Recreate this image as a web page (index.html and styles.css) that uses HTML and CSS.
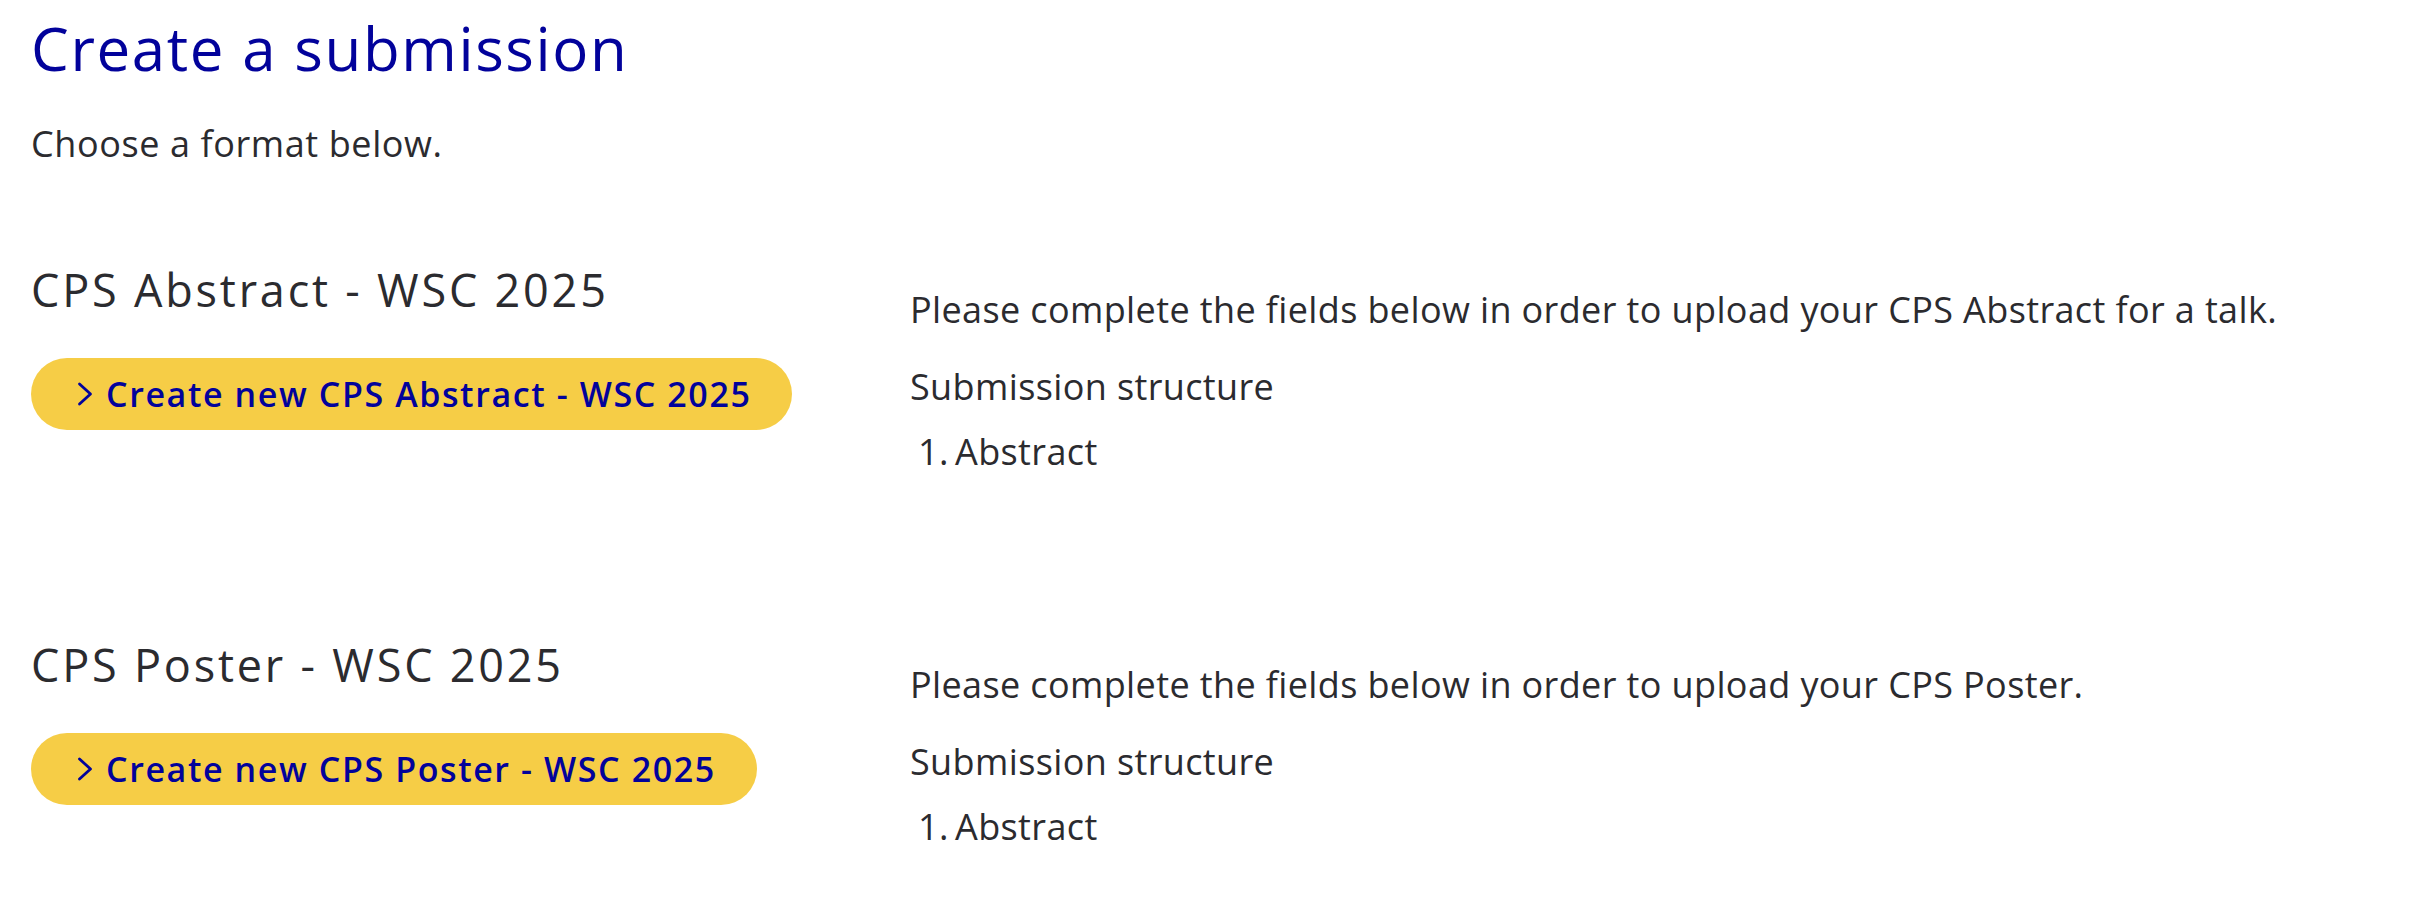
FILE: index.html
```html
<!DOCTYPE html>
<html lang="en">
<head>
<meta charset="utf-8">
<title>Create a submission</title>
<link rel="stylesheet" href="styles.css">
</head>
<body>
<main class="page">
  <h1 class="title">Create a submission</h1>
  <p class="intro">Choose a format below.</p>

  <section class="format">
    <div class="format-left">
      <h2 class="format-name">CPS Abstract - WSC 2025</h2>
      <a class="btn" href="#"><svg class="chev" viewBox="0 0 16 24" width="16" height="24" aria-hidden="true"><path d="M2.5 2 L13.5 12 L2.5 22" fill="none" stroke="currentColor" stroke-width="2.8" stroke-linecap="round" stroke-linejoin="round"/></svg><span>Create new CPS Abstract - WSC 2025</span></a>
    </div>
    <div class="format-right">
      <p class="desc">Please complete the fields below in order to upload your CPS Abstract for a talk.</p>
      <p class="struct">Submission structure</p>
      <ol class="parts"><li>Abstract</li></ol>
    </div>
  </section>

  <section class="format">
    <div class="format-left">
      <h2 class="format-name">CPS Poster - WSC 2025</h2>
      <a class="btn" href="#"><svg class="chev" viewBox="0 0 16 24" width="16" height="24" aria-hidden="true"><path d="M2.5 2 L13.5 12 L2.5 22" fill="none" stroke="currentColor" stroke-width="2.8" stroke-linecap="round" stroke-linejoin="round"/></svg><span>Create new CPS Poster - WSC 2025</span></a>
    </div>
    <div class="format-right">
      <p class="desc">Please complete the fields below in order to upload your CPS Poster.</p>
      <p class="struct">Submission structure</p>
      <ol class="parts"><li>Abstract</li></ol>
    </div>
  </section>
</main>
</body>
</html>
```

FILE: styles.css
```css
html, body {
  margin: 0;
  padding: 0;
  background: #ffffff;
}

body {
  font-family: "Open Sans", "Liberation Sans", sans-serif;
  color: #2b2b2f;
}

.page {
  padding: 12px 0 0 31px;
}

.title {
  margin: 0;
  font-size: 60px;
  line-height: 72px;
  font-weight: 500;
  letter-spacing: 1.6px;
  color: #02029b;
}

.intro {
  margin: 33px 0 0;
  font-size: 36px;
  line-height: 54px;
  letter-spacing: 0.6px;
}

.format {
  display: grid;
  grid-template-columns: 879px 1fr;
  margin-top: 89px;
}

.format + .format {
  margin-top: 156px;
}

.format-name {
  margin: 0;
  font-size: 45px;
  line-height: 60px;
  font-weight: 400;
  letter-spacing: 2.8px;
  color: #2b2b2f;
}

.btn {
  display: inline-flex;
  align-items: center;
  gap: 13px;
  margin-top: 38px;
  height: 72px;
  box-sizing: border-box;
  padding: 0 41px 0 46px;
  border-radius: 36px;
  background: #f6cd46;
  color: #02029b;
  font-size: 34px;
  font-weight: 600;
  line-height: 40px;
  letter-spacing: 1.6px;
  text-decoration: none;
}

.chev {
  flex: none;
}

.format-right {
  padding-top: 23px;
}

.desc,
.struct {
  margin: 0;
  font-size: 36px;
  line-height: 54px;
  letter-spacing: 0.38px;
}

.struct {
  margin-top: 23px;
}

.parts {
  margin: 11px 0 0;
  padding: 0 0 0 8px;
  list-style: none;
  counter-reset: part;
  font-size: 36px;
  line-height: 54px;
  letter-spacing: 0.38px;
}

.parts li {
  counter-increment: part;
}

.parts li::before {
  content: counter(part) ".";
  display: inline-block;
  width: 37px;
}
```
